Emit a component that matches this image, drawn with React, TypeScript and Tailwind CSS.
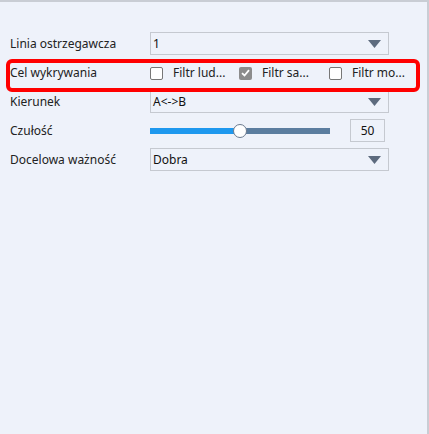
const labelCls = 'w-[150px] shrink-0 pl-[10px] text-[12px] text-[#222]';

function Arrow() {
  return (
    <svg width="13" height="8" viewBox="0 0 13 8" className="shrink-0">
      <path d="M0 0 H13 L6.5 8 Z" fill="#5d6b7e" />
    </svg>
  );
}

function Select({ value }: { value: string }) {
  return (
    <div className="flex h-[23px] w-[239px] items-center justify-between border border-[#c5c9d0] pl-[2px] pr-[7px] text-[12px] text-[#111]">
      <span>{value}</span>
      <Arrow />
    </div>
  );
}

function Check({ checked, label }: { checked?: boolean; label: string }) {
  return (
    <div className="flex items-center">
      {checked ? (
        <span className="flex h-[13px] w-[13px] items-center justify-center rounded-[2px] bg-[#8c8c8c]">
          <svg width="9" height="8" viewBox="0 0 9 8">
            <path d="M1 4.2 L3.5 6.5 L8 1.2" stroke="#fff" strokeWidth="1.8" fill="none" />
          </svg>
        </span>
      ) : (
        <span className="h-[13px] w-[13px] rounded-[2px] border border-[#777] bg-white" />
      )}
      <span className="ml-[10px] text-[12px] text-[#222]">{label}</span>
    </div>
  );
}

export default function App() {
  return (
    <div
      className="h-[434px] w-[429px] border-t-2 border-r-2 border-[#c9cdd4] bg-[#eef2fa]"
      style={{ fontFamily: '"Noto Sans", "Open Sans", sans-serif' }}
    >
      <div className="flex flex-col gap-[6px] pt-[30px]">
        <div className="flex h-[23px] items-center">
          <span className={labelCls}>Linia ostrzegawcza</span>
          <Select value="1" />
        </div>

        <div className="relative flex h-[23px] items-center">
          <span className={labelCls}>Cel wykrywania</span>
          <div className="flex items-center pt-[1px]">
            <div className="w-[89px]">
              <Check label="Filtr lud..." />
            </div>
            <div className="w-[90px]">
              <Check checked label="Filtr sa..." />
            </div>
            <Check label="Filtr mo..." />
          </div>
          <div className="pointer-events-none absolute left-[6px] top-[-2px] h-[33px] w-[414px] rounded-[6px] border-4 border-[#ff0000]" />
        </div>

        <div className="flex h-[23px] items-center">
          <span className={labelCls}>Kierunek</span>
          <Select value="A<->B" />
        </div>

        <div className="flex h-[23px] items-center">
          <span className={labelCls}>Czułość</span>
          <div className="relative flex h-[14px] w-[180px] items-center">
            <div className="h-[6px] w-[90px] bg-[#1e98ee]" />
            <div className="h-[6px] flex-1 bg-[#5b7d9f]" />
            <div className="absolute left-[83px] top-0 h-[14px] w-[14px] rounded-full border border-[#6b7a8e] bg-white" />
          </div>
          <div className="ml-[20px] flex h-[23px] w-[35px] items-center justify-center border border-[#c5c9d0] text-[12px] text-[#111]">
            50
          </div>
        </div>

        <div className="flex h-[23px] items-center">
          <span className={labelCls}>Docelowa ważność</span>
          <Select value="Dobra" />
        </div>
      </div>
    </div>
  );
}
